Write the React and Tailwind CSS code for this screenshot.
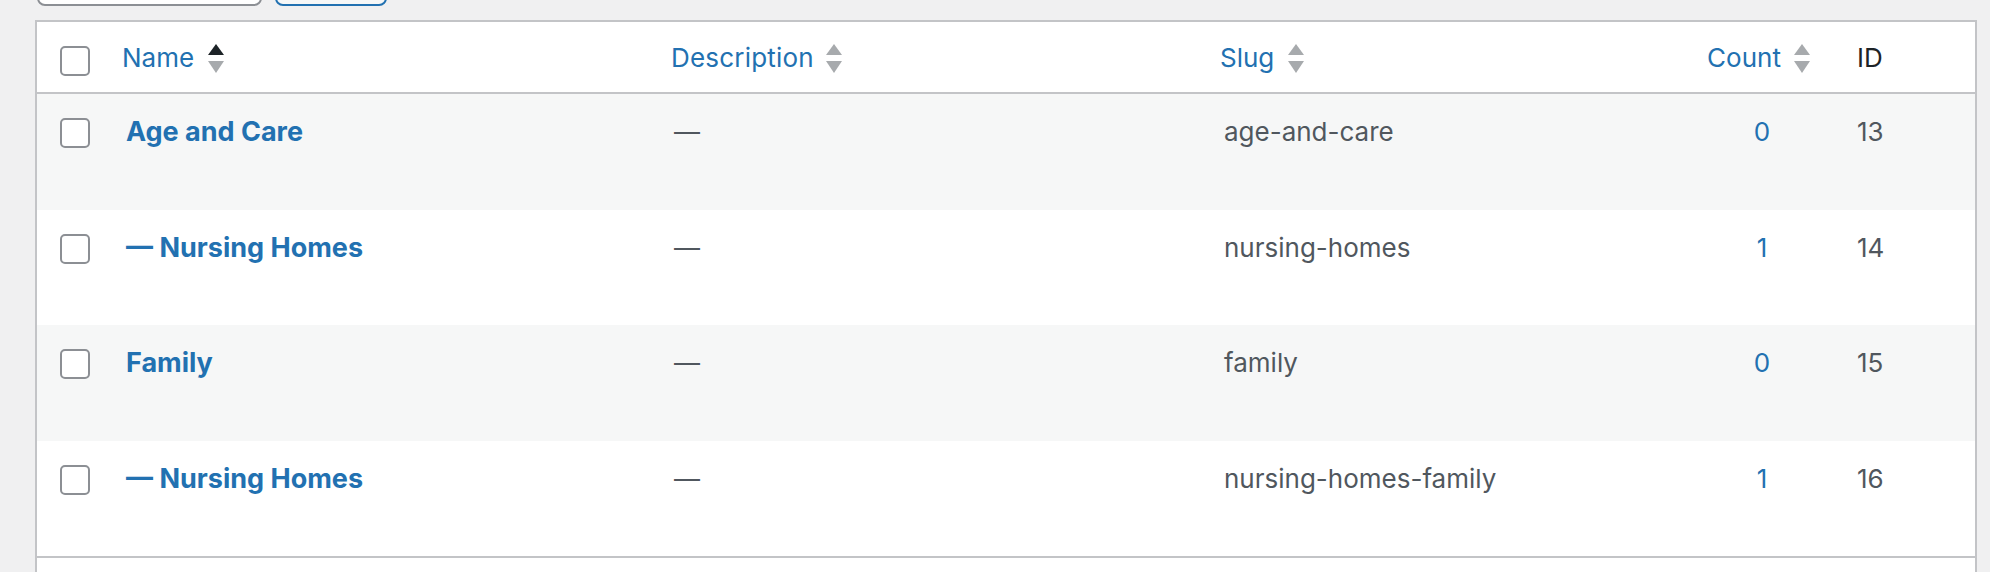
import React from "react";

const terms = [
  { name: "Age and Care", child: false, slug: "age-and-care", count: 0, id: 13 },
  { name: "Nursing Homes", child: true, slug: "nursing-homes", count: 1, id: 14 },
  { name: "Family", child: false, slug: "family", count: 0, id: 15 },
  { name: "Nursing Homes", child: true, slug: "nursing-homes-family", count: 1, id: 16 },
];

const grid = "grid grid-cols-[65px_549px_549px_480px_157px_1fr]";

// two little triangles, the top one dark when the column is sorted
const SortArrows = ({ active }) => (
  <svg width="16" height="29" viewBox="0 0 16 29" className="shrink-0">
    <path d="M8 0 L16 11 L0 11 Z" fill={active ? "#1d2327" : "#a7aaad"} />
    <path d="M0 17 L16 17 L8 29 Z" fill="#a7aaad" />
  </svg>
);

const Checkbox = () => (
  <span className="block w-[30px] h-[30px] rounded-[5px] border-2 border-[#8c8f94] bg-white" />
);

export default function App() {
  return (
    <div className="h-[572px] overflow-hidden bg-[#f0f0f1] pl-[35px] pr-[13px]" style={{ fontFamily: "Inter, 'Liberation Sans', sans-serif" }}>
      <div className="flex gap-[13px] -mt-[54px] pl-[2px] mb-[14px]">
        <div className="w-[225px] h-[60px] rounded-[8px] border-2 border-[#8c8f94] bg-white" />
        <div className="w-[112px] h-[60px] rounded-[8px] border-2 border-[#2271b1] bg-[#f6f7f7]" />
      </div>

      <div className="border-2 border-[#c3c4c7] bg-white">
        <div className={`${grid} h-[72px] border-b-2 border-[#c3c4c7] text-[26px] leading-[36px]`}>
          <div className="pl-[23px] pt-[24px]">
            <Checkbox />
          </div>
          <div className="pl-[20px] pt-[2px] flex items-center gap-[14px] text-[#2271b1]">
            <span>Name</span>
            <SortArrows active />
          </div>
          <div className="pl-[20px] pt-[2px] flex items-center gap-[12px] text-[#2271b1]">
            <span className="tracking-[0.2px]">Description</span>
            <SortArrows />
          </div>
          <div className="pl-[20px] pt-[2px] flex items-center gap-[14px] text-[#2271b1]">
            <span>Slug</span>
            <SortArrows />
          </div>
          <div className="pt-[2px] flex items-center justify-center gap-[13px] text-[#2271b1]">
            <span>Count</span>
            <SortArrows />
          </div>
          <div className="pl-[20px] pt-[2px] flex items-center text-[#1d2327]">ID</div>
        </div>

        {terms.map((term, i) => (
          <div
            key={term.id}
            className={`${grid} h-[115.5px] text-[26px] leading-[36px] ${i % 2 === 0 ? "bg-[#f6f7f7]" : "bg-white"}`}
          >
            <div className="pl-[23px] pt-[24px]">
              <Checkbox />
            </div>
            <div className="pl-[24px] pt-[20px]">
              <span className="text-[27px] font-bold text-[#2271b1]">
                {term.child ? "— " : ""}
                {term.name}
              </span>
            </div>
            <div className="pl-[23px] pt-[20px] text-[#50575e]">—</div>
            <div className="pl-[24px] pt-[20px] text-[#50575e]">{term.slug}</div>
            <div className="pl-[7px] pt-[20px] text-center text-[#2271b1]">{term.count}</div>
            <div className="pl-[20px] pt-[20px] text-[#50575e]">{term.id}</div>
          </div>
        ))}

        {/* footer row, only its top shows in the frame */}
        <div className="h-[70px] border-t-2 border-[#c3c4c7]" />
      </div>
    </div>
  );
}
